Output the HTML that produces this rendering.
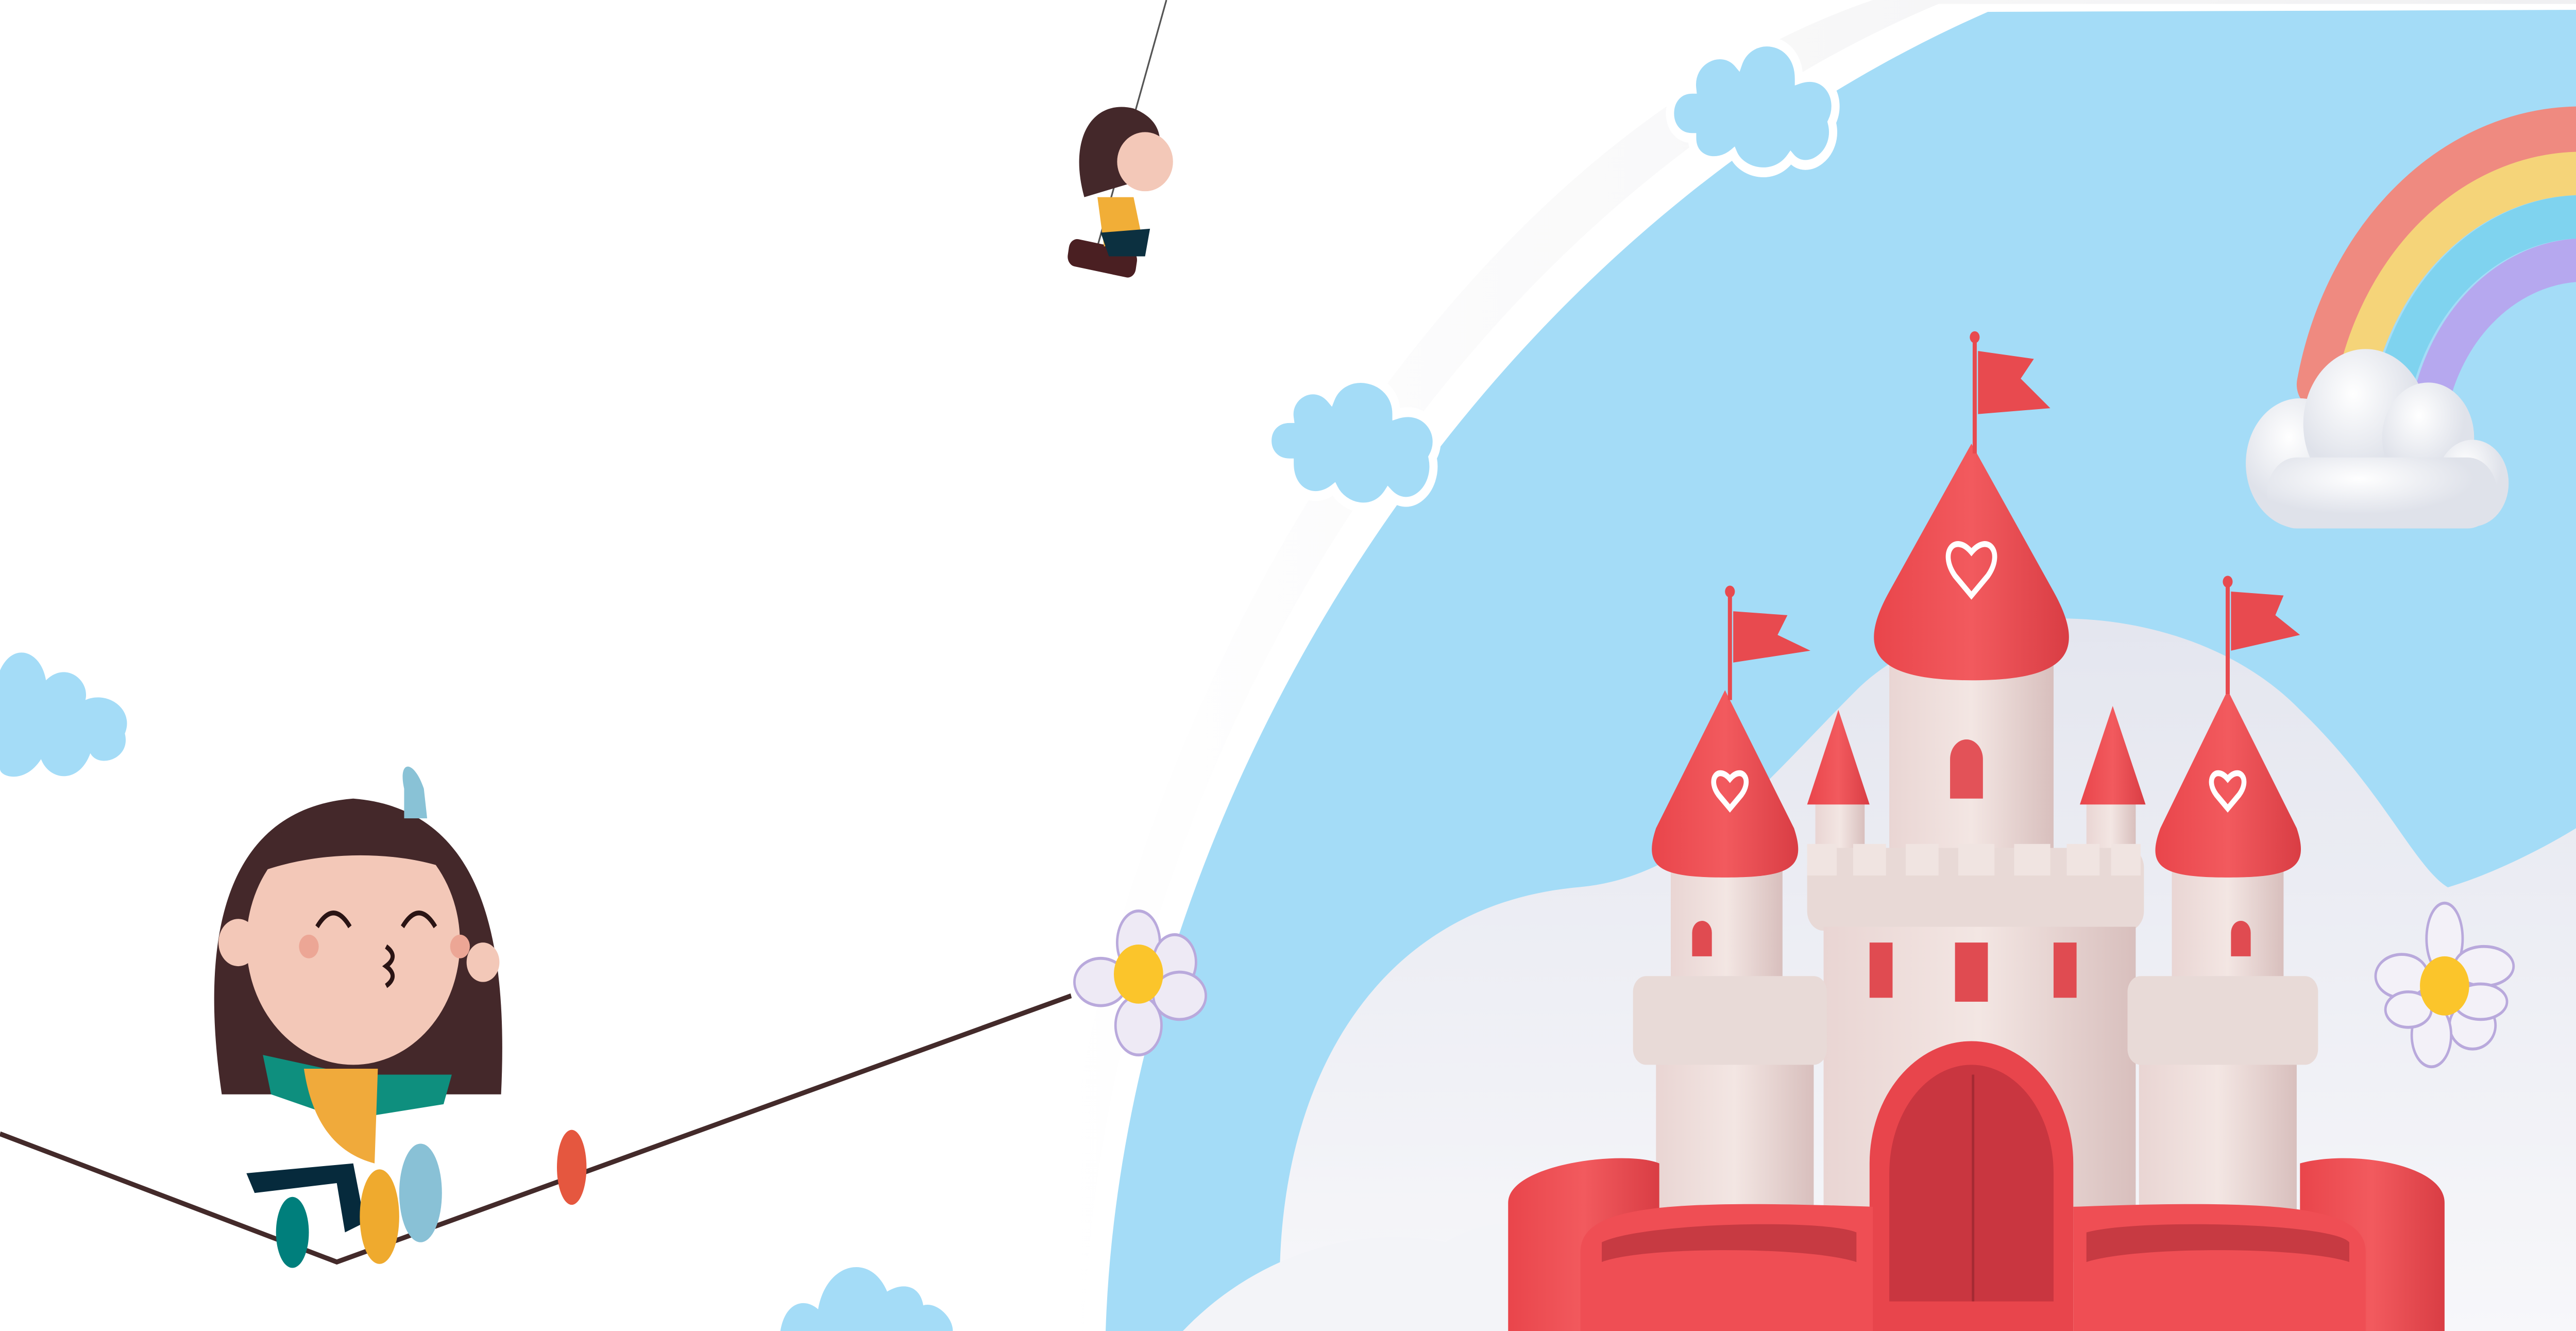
<!DOCTYPE html>
<html><head><meta charset="utf-8"><style>html,body{margin:0;padding:0;background:#fff;overflow:hidden}svg{display:block;position:absolute;left:0;top:0;width:100vw;height:100vh}</style></head>
<body>
<svg viewBox="0 0 1568 675" preserveAspectRatio="none" xmlns="http://www.w3.org/2000/svg">
<defs>
<linearGradient id="sh" x1="0" x2="1"><stop offset="0" stop-color="#fff"/><stop offset="1" stop-color="#ececee"/></linearGradient>
<linearGradient id="hill" x1="0" y1="0" x2="0" y2="1"><stop offset="0" stop-color="#e4e6ef"/><stop offset="1" stop-color="#f7f7fa"/></linearGradient>
<linearGradient id="wall" x1="0" x2="1"><stop offset="0" stop-color="#e9d5d3"/><stop offset=".5" stop-color="#f3e6e3"/><stop offset="1" stop-color="#d8bfbd"/></linearGradient>
<linearGradient id="red" x1="0" x2="1"><stop offset="0" stop-color="#e9454b"/><stop offset=".5" stop-color="#f25a5e"/><stop offset="1" stop-color="#d93d44"/></linearGradient>
<radialGradient id="cl" cx=".4" cy=".3"><stop offset="0" stop-color="#fff"/><stop offset="1" stop-color="#dfe2ea"/></radialGradient>
</defs>
<rect width="1568" height="675" fill="#fff"/>
<path d="M640 675 C650 400 860 80 1140 0 L1568 0 L1568 675 Z" fill="url(#sh)" opacity=".8"/>
<path d="M660 675 C670 410 870 110 1180 2 L1568 2 L1568 675 Z" fill="#fff"/>
<path d="M673 675 C683 420 885 125 1210 6 L1568 5 L1568 675 Z" fill="#a4dcf7"/>
<path d="M780 675 C770 560 830 460 960 450 C1030 445 1070 400 1130 350 C1190 300 1330 300 1400 360 C1450 400 1470 440 1490 450 C1530 440 1568 420 1568 420 L1568 675 Z" fill="url(#hill)"/>
<path d="M720 675 C760 640 820 620 880 630 C920 610 960 620 980 675 Z" fill="#f3f4f8"/>
<g fill="none" stroke-linecap="round">
<path d="M1410 195 A165 165 0 0 1 1568 66" stroke="#ef8a80" stroke-width="24"/>
<path d="M1432 200 A143 143 0 0 1 1568 88" stroke="#f5d479" stroke-width="22"/>
<path d="M1455 205 A120 120 0 0 1 1568 110" stroke="#7fd3ef" stroke-width="22"/>
<path d="M1478 210 A98 98 0 0 1 1568 132" stroke="#b6a8ef" stroke-width="22"/>
</g>
<g fill="url(#cl)"><circle cx="1400" cy="235" r="33"/><circle cx="1440" cy="215" r="38"/><circle cx="1478" cy="222" r="28"/><circle cx="1505" cy="245" r="22"/><rect x="1380" y="232" width="140" height="36" rx="18"/></g>
<g fill="#a4dcf7" stroke="#fff" stroke-width="5">
<path d="M1030 70 C1012 70 1012 45 1030 45 C1028 30 1048 22 1058 32 C1065 15 1095 18 1095 40 C1112 35 1122 50 1115 62 C1120 78 1100 90 1090 80 C1080 92 1060 88 1055 78 C1045 85 1030 82 1030 70Z"/>
<path d="M785 235 C767 235 767 212 785 212 C783 200 800 192 810 202 C818 185 850 190 850 210 C868 205 880 220 872 232 C876 248 858 262 845 250 C836 262 818 258 812 248 C800 256 785 250 785 235Z"/>
</g>
<g fill="#a4dcf7">
<path d="M0 340 C8 325 25 330 28 345 C40 335 55 345 52 355 C66 350 82 360 76 372 C80 385 60 390 55 382 C48 398 30 396 25 385 C15 398 0 394 0 390Z"/>
<path d="M475 675 C478 660 490 658 498 664 C503 640 530 635 540 655 C550 650 560 652 562 662 C570 660 580 668 580 675Z"/>
</g>
<g>
<rect x="1017" y="438" width="68" height="65" fill="url(#wall)"/>
<rect x="1322" y="438" width="68" height="65" fill="url(#wall)"/>
<rect x="1105" y="405" width="30" height="35" fill="url(#wall)"/>
<rect x="1270" y="405" width="30" height="35" fill="url(#wall)"/>
<rect x="1150" y="335" width="100" height="100" fill="url(#wall)"/>
<path d="M1187 405 v-20 a10 10 0 0 1 20 0 v20 z" fill="#e35258"/>
<path d="M1200 225 L1150 300 C1130 330 1140 345 1200 345 C1260 345 1270 330 1250 300 Z" fill="url(#red)"/>
<path d="M1008 420 L1050 350 L1092 420 C1100 440 1090 445 1050 445 C1010 445 1000 440 1008 420Z" fill="url(#red)"/>
<path d="M1315 420 L1356 350 L1398 420 C1406 440 1396 445 1356 445 C1316 445 1306 440 1315 420Z" fill="url(#red)"/>
<path d="M1119 360 L1100 408 L1138 408 Z" fill="url(#red)"/>
<path d="M1286 358 L1266 408 L1306 408 Z" fill="url(#red)"/>
<g stroke="#e84a4f" stroke-width="2.5"><line x1="1202" y1="172" x2="1202" y2="230"/><line x1="1053" y1="300" x2="1053" y2="355"/><line x1="1356" y1="295" x2="1356" y2="352"/></g>
<g fill="#e84a4f"><circle cx="1202" cy="171" r="3"/><circle cx="1053" cy="300" r="3"/><circle cx="1356" cy="295" r="3"/>
<path d="M1204 178 L1238 182 L1230 192 L1248 207 L1204 210Z"/>
<path d="M1055 310 L1088 312 L1082 322 L1102 330 L1055 336Z"/>
<path d="M1358 300 L1390 302 L1385 312 L1400 322 L1358 330Z"/></g>
<g fill="none" stroke="#fff" stroke-width="3"><path d="M1200 280 c-10-10-20 0-10 12 l10 10 l10-10 c10-12 0-22-10-12z"/><path d="M1053 395 c-7-7-14 0-7 8 l7 7 l7-7 c7-8 0-15-7-8z"/><path d="M1356 395 c-7-7-14 0-7 8 l7 7 l7-7 c7-8 0-15-7-8z"/></g>
<rect x="1100" y="430" width="205" height="42" rx="10" fill="#e8d9d6"/>
<g fill="#f0e4e1"><rect x="1100" y="428" width="18" height="16"/><rect x="1128" y="428" width="20" height="16"/><rect x="1160" y="428" width="20" height="16"/><rect x="1192" y="428" width="22" height="16"/><rect x="1226" y="428" width="22" height="16"/><rect x="1258" y="428" width="20" height="16"/><rect x="1285" y="428" width="18" height="16"/></g>
<rect x="1110" y="470" width="190" height="170" fill="url(#wall)"/>
<g fill="#e04b51"><rect x="1138" y="478" width="14" height="28"/><rect x="1190" y="478" width="20" height="30"/><rect x="1250" y="478" width="14" height="28"/><path d="M1030 485 v-12 a6 6 0 0 1 12 0 v12z"/><path d="M1358 485 v-12 a6 6 0 0 1 12 0 v12z"/></g>
<rect x="1008" y="535" width="96" height="105" fill="url(#wall)"/>
<rect x="1302" y="535" width="96" height="105" fill="url(#wall)"/>
<rect x="994" y="495" width="118" height="45" rx="8" fill="#e8dad7"/>
<rect x="1295" y="495" width="116" height="45" rx="8" fill="#e8dad7"/>
<path d="M1138 675 V590 a62 62 0 0 1 124 0 V675Z" fill="#e8454c"/>
<path d="M1150 675 V595 a50 55 0 0 1 100 0 V675Z" fill="#c93640"/>
<line x1="1201" y1="545" x2="1201" y2="675" stroke="#a52a33" stroke-width="1.5"/>
<path d="M918 675 V610 C918 590 990 583 1010 590 L1010 675Z" fill="url(#red)"/>
<path d="M1400 590 C1430 583 1488 590 1488 610 V675 H1400Z" fill="url(#red)"/>
<path d="M962 675 V635 C962 612 1010 608 1140 612 V675Z" fill="#ef4e54"/>
<path d="M1262 612 C1390 608 1440 612 1440 635 V675 H1262Z" fill="#ef4e54"/>
<path d="M975 630 C1000 620 1110 618 1130 625 L1130 640 C1100 632 1000 632 975 640Z" fill="#c73a42"/>
<path d="M1270 625 C1300 618 1420 620 1430 630 L1430 640 C1400 632 1300 632 1270 640Z" fill="#c73a42"/>
<rect x="1145" y="660" width="112" height="15" fill="#e8454c"/>
</g>
<g>
<g fill="#eeeaf5" stroke="#b9a9dc" stroke-width="1.5"><ellipse cx="693" cy="478" rx="13" ry="16"/><ellipse cx="715" cy="488" rx="13" ry="14"/><ellipse cx="718" cy="505" rx="16" ry="12"/><ellipse cx="693" cy="520" rx="14" ry="15"/><ellipse cx="670" cy="498" rx="16" ry="12"/></g>
<circle cx="693" cy="494" r="15" fill="#fbc52b"/>
<g fill="#f3f1f8" stroke="#b9a9dc" stroke-width="1.5"><ellipse cx="1488" cy="476" rx="11" ry="18"/><ellipse cx="1512" cy="490" rx="18" ry="10"/><ellipse cx="1505" cy="520" rx="14" ry="12"/><ellipse cx="1480" cy="525" rx="12" ry="16"/><ellipse cx="1462" cy="495" rx="16" ry="11"/><ellipse cx="1510" cy="508" rx="16" ry="9"/><ellipse cx="1466" cy="512" rx="14" ry="9"/></g>
<circle cx="1488" cy="500" r="15" fill="#fbc52b"/>
</g>
<polyline points="0,575 205,640 652,505" fill="none" stroke="#432a2a" stroke-width="2.5"/>
<g>
<path d="M135 555 C120 470 140 410 215 405 C290 410 310 470 305 555 Z" fill="#44282a"/>
<ellipse cx="215" cy="478" rx="65" ry="62" fill="#f3c8b8"/>
<path d="M150 445 C170 400 260 400 285 445 C250 430 190 430 150 445Z" fill="#44282a"/>
<circle cx="145" cy="478" r="12" fill="#f3c8b8"/><circle cx="294" cy="488" r="10" fill="#f3c8b8"/>
<circle cx="188" cy="480" r="6" fill="#eca695"/><circle cx="280" cy="480" r="6" fill="#eca695"/>
<g fill="none" stroke="#2a1414" stroke-width="2.5"><path d="M193 470 q10-14 20 0"/><path d="M245 470 q10-14 20 0"/><path d="M235 480 q8 5 0 10 q8 5 0 10"/></g>
<path d="M160 535 L215 545 L275 545 L270 560 L210 568 L165 555Z" fill="#0e8f7e"/>
<path d="M185 542 L230 542 L228 590 C205 585 190 570 185 542Z" fill="#f0aa3b"/>
<path d="M150 595 L215 590 L222 620 L210 625 L205 600 L155 605Z" fill="#062a3c"/>
<path d="M246 400 C242 385 252 385 258 400 L260 415 L246 415Z" fill="#89c2d6"/>
<g><ellipse cx="178" cy="625" rx="10" ry="18" fill="#007f7c"/><ellipse cx="231" cy="617" rx="12" ry="24" fill="#efaa2e"/><ellipse cx="256" cy="605" rx="13" ry="25" fill="#89c1d6"/><ellipse cx="348" cy="592" rx="9" ry="19" fill="#e5573f"/></g>
</g>
<line x1="710" y1="0" x2="668" y2="125" stroke="#555" stroke-width="1"/>
<rect x="650" y="124" width="42" height="14" rx="5" fill="#4a1f22" transform="rotate(10 671 131)"/>
<path d="M660 100 C650 70 665 50 690 55 C705 60 712 70 700 90 Z" fill="#44282a"/>
<ellipse cx="697" cy="82" rx="17" ry="15" fill="#f3c8b8"/>
<path d="M668 100 L690 100 L695 120 L672 125Z" fill="#f1ae37"/>
<path d="M670 118 L700 116 L697 130 L675 130Z" fill="#0c3040"/>
</svg>
</body></html>
